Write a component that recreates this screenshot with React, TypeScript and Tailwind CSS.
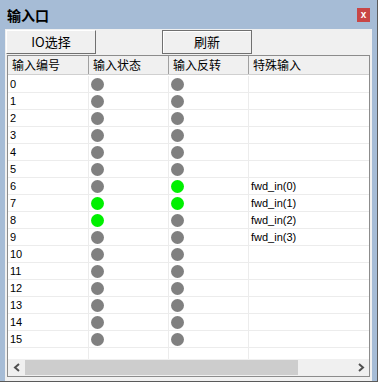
import React from "react";

const rows = [
  { n: "0", s: 0, r: 0, sp: "" },
  { n: "1", s: 0, r: 0, sp: "" },
  { n: "2", s: 0, r: 0, sp: "" },
  { n: "3", s: 0, r: 0, sp: "" },
  { n: "4", s: 0, r: 0, sp: "" },
  { n: "5", s: 0, r: 0, sp: "" },
  { n: "6", s: 0, r: 1, sp: "fwd_in(0)" },
  { n: "7", s: 1, r: 1, sp: "fwd_in(1)" },
  { n: "8", s: 1, r: 0, sp: "fwd_in(2)" },
  { n: "9", s: 0, r: 0, sp: "fwd_in(3)" },
  { n: "10", s: 0, r: 0, sp: "" },
  { n: "11", s: 0, r: 0, sp: "" },
  { n: "12", s: 0, r: 0, sp: "" },
  { n: "13", s: 0, r: 0, sp: "" },
  { n: "14", s: 0, r: 0, sp: "" },
  { n: "15", s: 0, r: 0, sp: "" },
];

function Dot({ on }: { on: number }) {
  return (
    <div
      className={
        "ml-[2px] h-[13px] w-[13px] rounded-full " +
        (on ? "bg-[#00f000]" : "bg-[#808080]")
      }
    />
  );
}

const cjk = { fontFamily: '"Noto Sans CJK SC", "Liberation Sans", sans-serif' };
const sans = { fontFamily: '"Liberation Sans", "Noto Sans CJK SC", sans-serif' };

function Chevron({ dir }: { dir: "l" | "r" }) {
  return (
    <svg width="8" height="9" viewBox="0 0 8 9">
      <path
        d={dir === "l" ? "M6 1 L2 4.5 L6 8" : "M2 1 L6 4.5 L2 8"}
        fill="none"
        stroke="#505050"
        strokeWidth="2"
      />
    </svg>
  );
}

export default function App() {
  return (
    <div className="h-[387px] w-[385px] bg-white">
      <div className="flex h-[382px] w-[378px] flex-col border-r border-b border-[#5a5a5a] bg-[#a6bcd6]">
        {/* title bar */}
        <div className="flex h-[29px] items-center justify-between pl-[7px] pr-[7px]">
          <span className="text-[14px] font-bold leading-none text-black" style={cjk}>
            输入口
          </span>
          <div className="flex h-[14px] w-[13px] items-center justify-center bg-[#c84646] text-[10px] font-bold leading-none text-white" style={sans}>
            x
          </div>
        </div>
        {/* body */}
        <div className="mx-[5px] flex flex-1 flex-col bg-[#f0f0f0]">
          <div className="flex h-[26px] items-start pt-[1px]">
            <div className="ml-[1px] flex h-[24px] w-[90px] items-center justify-center border border-t-white border-l-white border-r-[#707070] border-b-[#707070] bg-[#f0f0f0] text-[13px] text-black" style={cjk}>
              IO选择
            </div>
            <div className="ml-[66px] flex h-[24px] w-[90px] items-center justify-center border border-[#707070] bg-[#f0f0f0] text-[13px] text-black shadow-[inset_1px_1px_0_#ffffff]" style={cjk}>
              刷新
            </div>
          </div>
          {/* table */}
          <div className="mb-[4px] ml-[2px] mr-[2px] flex flex-1 flex-col border border-[#8c8c8c] bg-white">
            <div className="flex h-[19px] border-b border-[#d0d0d0] bg-[#f0f0f0] text-[12px] leading-none text-black" style={cjk}>
              <div className="flex w-[81px] items-center border-r border-[#a0a0a0] pl-[4px]">输入编号</div>
              <div className="flex w-[80px] items-center border-r border-[#a0a0a0] pl-[4px]">输入状态</div>
              <div className="flex w-[80px] items-center border-r border-[#a0a0a0] pl-[4px]">输入反转</div>
              <div className="flex flex-1 items-center pl-[4px]">特殊输入</div>
            </div>
            <div className="flex flex-1 flex-col pt-[1px]">
              {rows.map((r) => (
                <div key={r.n} className="flex h-[17px] border-b border-[#ececec] text-[11px] leading-none text-black" style={sans}>
                  <div className="flex w-[81px] items-center border-r border-[#ececec] pl-[2px]">{r.n}</div>
                  <div className="flex w-[80px] items-center border-r border-[#ececec]"><Dot on={r.s} /></div>
                  <div className="flex w-[80px] items-center border-r border-[#ececec]"><Dot on={r.r} /></div>
                  <div className="flex flex-1 items-center pl-[2px]">{r.sp}</div>
                </div>
              ))}
              <div className="flex flex-1">
                <div className="w-[81px] border-r border-[#ececec]" />
                <div className="w-[80px] border-r border-[#ececec]" />
                <div className="w-[80px] border-r border-[#ececec]" />
                <div className="flex-1" />
              </div>
            </div>
            {/* scrollbar */}
            <div className="flex h-[17px] items-center bg-[#f0f0f0]">
              <div className="flex w-[17px] items-center justify-center">
                <Chevron dir="l" />
              </div>
              <div className="h-[15px] w-[273px] bg-[#cdcdcd]" />
              <div className="flex-1" />
              <div className="flex w-[17px] items-center justify-center">
                <Chevron dir="r" />
              </div>
            </div>
          </div>
        </div>
      </div>
    </div>
  );
}
